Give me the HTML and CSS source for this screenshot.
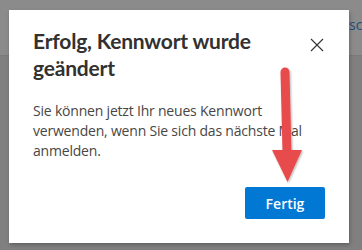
FILE: index.html
```html
<!DOCTYPE html>
<html lang="de">
<head>
<meta charset="utf-8">
<link rel="stylesheet" href="styles.css">
</head>
<body>
<div class="page">
  <div class="page-header"><span class="page-link">sch</span></div>
  <div class="page-body"></div>
</div>
<div class="backdrop">
  <div class="dialog">
    <div class="dialog-head">
      <h1 class="dialog-title">Erfolg, Kennwort wurde geändert</h1>
      <button class="close" aria-label="Schließen">
        <svg width="14" height="14" viewBox="0 0 14 14"><path d="M1 1L13 13M13 1L1 13" stroke="#323130" stroke-width="1.1" fill="none"/></svg>
      </button>
    </div>
    <p class="dialog-text">Sie können jetzt Ihr neues Kennwort verwenden, wenn Sie sich das nächste Mal anmelden.</p>
    <div class="dialog-foot">
      <button class="primary">Fertig</button>
    </div>
  </div>
  <svg class="arrow" width="40" height="126" viewBox="0 0 40 126">
    <defs>
      <filter id="sh" x="-50%" y="-20%" width="200%" height="140%">
        <feDropShadow dx="1" dy="1" stdDeviation="1.2" flood-color="#000" flood-opacity="0.3"/>
      </filter>
    </defs>
    <g filter="url(#sh)">
      <path d="M15 10 L17 90" stroke="#e84b4b" stroke-width="9" stroke-linecap="round" fill="none"/>
      <path d="M2 88 L32 88 L17.5 120 Z" fill="#e84b4b"/>
    </g>
  </svg>
</div>
</body>
</html>
```

FILE: styles.css
```css
html, body {
  margin: 0;
  padding: 0;
}
body {
  width: 362px;
  height: 250px;
  overflow: hidden;
  position: relative;
  font-family: "Open Sans", "Noto Sans", sans-serif;
  background: #838383;
}
.page {
  display: flex;
  flex-direction: column;
  height: 250px;
}
.page-header {
  height: 56px;
  background: #8b8b8b;
  border-bottom: 1px solid #7a7a7a;
  display: flex;
  justify-content: flex-start;
  align-items: flex-start;
  padding: 15px 0 0 349px;
  box-sizing: border-box;
  overflow: hidden;
}
.page-link {
  color: #1f4f7a;
  font-size: 14px;
  white-space: nowrap;
}
.page-body {
  flex: 1;
  background: #808080;
}
.backdrop {
  position: absolute;
  inset: 0;
  padding: 10px 0 0 9px;
}
.dialog {
  width: 340px;
  height: 233px;
  box-sizing: border-box;
  background: #fff;
  box-shadow: 1px 2px 4px rgba(0,0,0,0.25);
  padding: 17px 24px 24px 24px;
  display: flex;
  flex-direction: column;
}
.dialog-head {
  display: flex;
  justify-content: space-between;
  align-items: flex-start;
}
.dialog-title {
  margin: 0;
  font-family: "Lato", "Open Sans", sans-serif;
  font-size: 21px;
  line-height: 27px;
  font-weight: 700;
  color: #323130;
  width: 240px;
  letter-spacing: -0.2px;
}
.close {
  border: 0;
  background: none;
  padding: 0;
  margin: 10px 0 0 0;
  width: 16px;
  height: 16px;
  display: flex;
  align-items: center;
  justify-content: center;
}
.dialog-text {
  margin: 20px 0 0 0;
  font-size: 14px;
  line-height: 20px;
  color: #484644;
  letter-spacing: -0.2px;
}
.dialog-foot {
  margin-top: auto;
  display: flex;
  justify-content: flex-end;
}
.primary {
  width: 80px;
  height: 32px;
  border: 0;
  border-radius: 2px;
  background: #0078d4;
  color: #fff;
  font-family: "Open Sans", "Noto Sans", sans-serif;
  font-size: 14px;
  font-weight: 600;
}
.arrow {
  position: absolute;
  left: 270px;
  top: 62px;
}
```
